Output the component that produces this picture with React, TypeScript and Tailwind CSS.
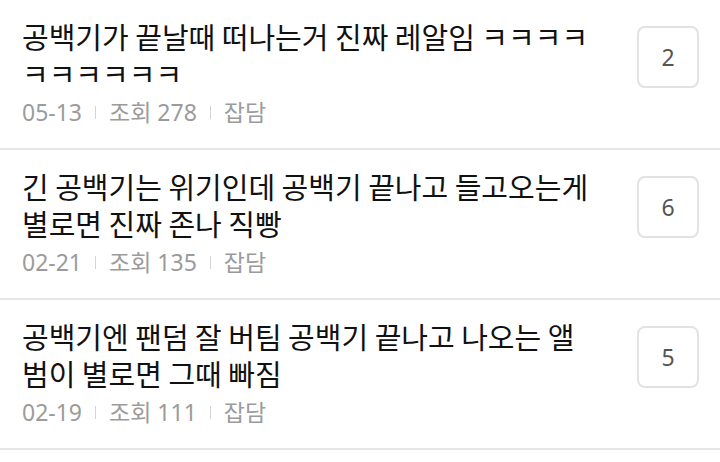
const posts = [
  {
    title: "공백기가 끝날때 떠나는거 진짜 레알임 ㅋㅋㅋㅋㅋㅋㅋㅋㅋㅋ",
    date: "05-13",
    views: 278,
    board: "잡담",
    comments: 2,
  },
  {
    title: "긴 공백기는 위기인데 공백기 끝나고 들고오는게 별로면 진짜 존나 직빵",
    date: "02-21",
    views: 135,
    board: "잡담",
    comments: 6,
  },
  {
    title: "공백기엔 팬덤 잘 버팀 공백기 끝나고 나오는 앨범이 별로면 그때 빠짐",
    date: "02-19",
    views: 111,
    board: "잡담",
    comments: 5,
  },
];

function Sep() {
  return <span className="mx-[13px] inline-block w-px h-[13px] bg-[#d4d4d4]"></span>;
}

export default function App() {
  return (
    <div className="w-[720px] h-[462px] overflow-hidden bg-white font-['Noto_Sans','Noto_Sans_CJK_KR',sans-serif]">
      {posts.map((post, i) => (
        <div key={i} className="flex items-start gap-[42px] pl-[22px] pr-[21px] pt-[18px] pb-[21px] border-b-2 border-[#e6e6e6]">
          <div className="flex-1 min-w-0">
            {/* Title */}
            <p className="text-[29px] leading-[37px] text-[#111] font-['Noto_Sans_CJK_KR',sans-serif]">
              {post.title}
            </p>
            {/* Meta */}
            <div className="flex items-center mt-[5px] text-[23px] leading-[30px] text-[#9b9b9b]">
              <span>{post.date}</span>
              <Sep />
              <span>조회 {post.views}</span>
              <Sep />
              <span>{post.board}</span>
            </div>
          </div>
          <div className="mt-[8px] w-[62px] h-[62px] shrink-0 flex items-center justify-center rounded-[8px] border-2 border-[#e2e2e2] text-[23px] text-[#555]">
            {post.comments}
          </div>
        </div>
      ))}
    </div>
  );
}
